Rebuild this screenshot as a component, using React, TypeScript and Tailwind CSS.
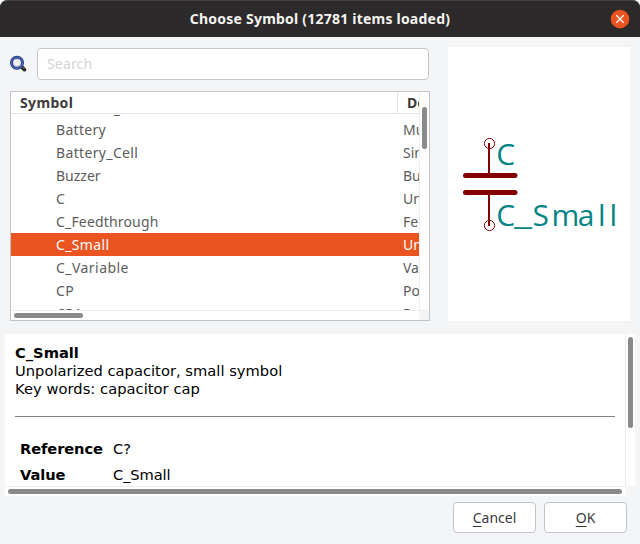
import React from "react";

const ubuntu = "font-['Noto_Sans','Open_Sans',sans-serif]";

type Item = { name: string; desc: string; tracking: string; selected?: boolean };

const items: Item[] = [
  { name: "Antenna_Shield", desc: "An", tracking: "tracking-[0.3px] pt-[2px]" },
  { name: "Battery", desc: "Mu", tracking: "tracking-[0.3px]" },
  { name: "Battery_Cell", desc: "Sin", tracking: "tracking-[0.35px]" },
  { name: "Buzzer", desc: "Bu", tracking: "tracking-normal" },
  { name: "C", desc: "Un", tracking: "tracking-normal" },
  { name: "C_Feedthrough", desc: "Fe", tracking: "tracking-[0.17px]" },
  { name: "C_Small", desc: "Un", tracking: "tracking-[0.35px]", selected: true },
  { name: "C_Variable", desc: "Va", tracking: "tracking-[0.45px]" },
  { name: "CP", desc: "Po", tracking: "tracking-[0.4px]" },
  { name: "CP1", desc: "Po", tracking: "tracking-[0.4px]" },
];

function TitleBar() {
  return (
    <header className="relative flex h-[37px] shrink-0 items-center justify-center rounded-t-[7px] border-t border-[#454443] bg-[#2c2a2a]">
      <h1 className="text-[14px] leading-5 font-bold tracking-[0.22px] whitespace-nowrap text-[#f4f3f1]">
        Choose Symbol (12781 items loaded)
      </h1>
      <svg className="absolute top-[8px] right-[10px] h-5 w-5" viewBox="0 0 20 20">
        <circle cx="10" cy="10" r="9.3" fill="#e95420" />
        <path d="M6.3 6.3l7.4 7.4M13.7 6.3l-7.4 7.4" stroke="#fff" strokeWidth="1.3" />
      </svg>
    </header>
  );
}

function Magnifier() {
  return (
    <svg className="h-[18px] w-[18px]" viewBox="0 0 18 18">
      <path d="M11.6 11.8l2.9 2.9" stroke="#222" strokeWidth="3.6" strokeLinecap="round" />
      <path d="M12.6 12.2l2 2" stroke="#8a8a80" strokeWidth="0.9" />
      <circle cx="7" cy="7.8" r="5.5" fill="#dddce0" stroke="#22346f" strokeWidth="3" />
      <circle cx="7" cy="7.8" r="5.4" fill="none" stroke="#4a66b8" strokeWidth="1.6" />
      <circle cx="7" cy="7.4" r="2.8" fill="#f5f4f4" />
    </svg>
  );
}

function SymbolList() {
  return (
    <div className="flex h-[230px] w-[420px] flex-col border border-[#c0c4c9] bg-white">
      <div className="flex min-h-0 flex-1">
        <div className="flex w-[408px] flex-col overflow-hidden">
          <div className="flex h-[22px] shrink-0 border-b border-[#e4e4e4] text-[14px] leading-[22px] font-bold text-[#3b3b3b]">
            <div className="w-[387px] shrink-0 border-r border-[#e4e4e4] pl-[9px] tracking-[0.35px]">Symbol</div>
            <div className="shrink-0 pl-[9px]">Description</div>
          </div>
          <div className="min-h-0 flex-1 overflow-hidden">
            <div className="-mt-[19px]">
              {items.map((it) => (
                <div
                  key={it.name}
                  className={
                    "flex h-[23px] text-[14px] leading-[23px] whitespace-nowrap " +
                    (it.selected ? "bg-[#e95420] text-white" : "text-[#5c5c5c]")
                  }
                >
                  <div className={"w-[392px] shrink-0 pl-[45px] " + it.tracking}>{it.name}</div>
                  <div className="shrink-0">{it.desc}</div>
                </div>
              ))}
            </div>
          </div>
        </div>
        <div className="w-[10px] border-l border-[#eeeeee] pt-[15px] pl-[2px]">
          <div className="h-[42px] w-[5px] rounded-full bg-[#8a8a8a]" />
        </div>
      </div>
      <div className="flex h-[10px] border-t border-[#eeeeee]">
        <div className="w-[408px] pt-[2px] pl-[3px]">
          <div className="h-[5px] w-[69px] rounded-full bg-[#8a8a8a]" />
        </div>
        <div className="flex-1 bg-[#f4f5f7]" />
      </div>
    </div>
  );
}

function Preview() {
  return (
    <svg className="h-[274px] w-[182px] bg-white" viewBox="448 47 182 274">
      <g stroke="#840000" fill="none">
        <circle cx="489.5" cy="143.5" r="5.1" strokeWidth="1" />
        <circle cx="489.5" cy="225.5" r="5.1" strokeWidth="1" />
        <path d="M489 143v32M489 192v34" strokeWidth="2" />
        <path d="M465.5 175.5h49.5M465.5 192.5h49.5" strokeWidth="5" strokeLinecap="round" />
      </g>
      <g className="font-['Open_Sans',sans-serif]" fill="#008484" fontSize="30">
        <text x="496.2" y="165">C</text>
        <text x="496.2" y="226">C</text>
        <text x="514" y="225" textLength="18" lengthAdjust="spacingAndGlyphs">_</text>
        <text x="532.4 551.5 577.8 598 609.6" y="226">Small</text>
      </g>
    </svg>
  );
}

function Details() {
  return (
    <section className="flex h-[162px] w-[630px] flex-col font-['DejaVu_Sans',sans-serif] text-black">
      <div className="flex h-[152px] bg-white">
        <div className="w-[620px] shrink-0 overflow-hidden pt-[10px] pl-[10px] text-[14.67px] leading-[18px] whitespace-nowrap">
          <div className="font-bold">C_Small</div>
          <div className="tracking-[0.03px]">Unpolarized capacitor, small symbol</div>
          <div className="tracking-[0.05px]">Key words: capacitor cap</div>
          <div className="mt-[18px] w-[600px] border-t border-[#808080]" />
          <div className="mt-[19px] grid grid-cols-[93px_1fr] gap-y-[8px] pt-[4px] pl-[5px] tracking-[-0.1px]">
            <b>Reference</b>
            <span>C?</span>
            <b>Value</b>
            <span>C_Small</span>
          </div>
        </div>
        <div className="w-[10px] border-l border-[#eeeeee] pt-[3px] pl-[2px]">
          <div className="h-[91px] w-[5px] rounded-full bg-[#8a8a8a]" />
        </div>
      </div>
      <div className="h-[10px] w-[620px] border-t border-[#eeeeee] bg-white pt-[2px] pl-[3px]">
        <div className="h-[5px] w-[614px] rounded-full bg-[#8a8a8a]" />
      </div>
    </section>
  );
}

function Button({ first, rest }: { first: string; rest: string }) {
  return (
    <button className="h-[31px] w-[83px] rounded-[4px] border border-[#c0c4cc] bg-white text-[14px] leading-[29px] text-[#3b3b3b]">
      <span className="underline underline-offset-[3px]">{first}</span>
      {rest}
    </button>
  );
}

export default function App() {
  return (
    <div className="h-[544px] w-[640px] overflow-hidden bg-white">
      <div className={"flex h-[544px] w-[640px] flex-col rounded-t-[7px] bg-[#f4f5f7] " + ubuntu}>
        <TitleBar />
        <main className="flex flex-col pl-[5px]">
          <div className="flex gap-[18px] pt-[10px] pl-[5px]">
            <div className="flex flex-col gap-[11px]">
              <div className="mt-px flex h-[32px] items-center gap-[9px]">
                <Magnifier />
                <input
                  placeholder="Search"
                  className="h-[32px] w-[392px] rounded-[4px] border border-[#c3c7cc] bg-white px-[9px] pb-[2px] text-[14px] tracking-[0.15px] text-[#3b3b3b] placeholder:text-[#d3d3d3] focus:outline-none"
                />
              </div>
              <SymbolList />
            </div>
            <Preview />
          </div>
          <div className="mt-[13px]">
            <Details />
          </div>
          <div className="mt-[6px] flex justify-end gap-[8px] pr-[13px]">
            <Button first="C" rest="ancel" />
            <Button first="O" rest="K" />
          </div>
        </main>
      </div>
    </div>
  );
}
